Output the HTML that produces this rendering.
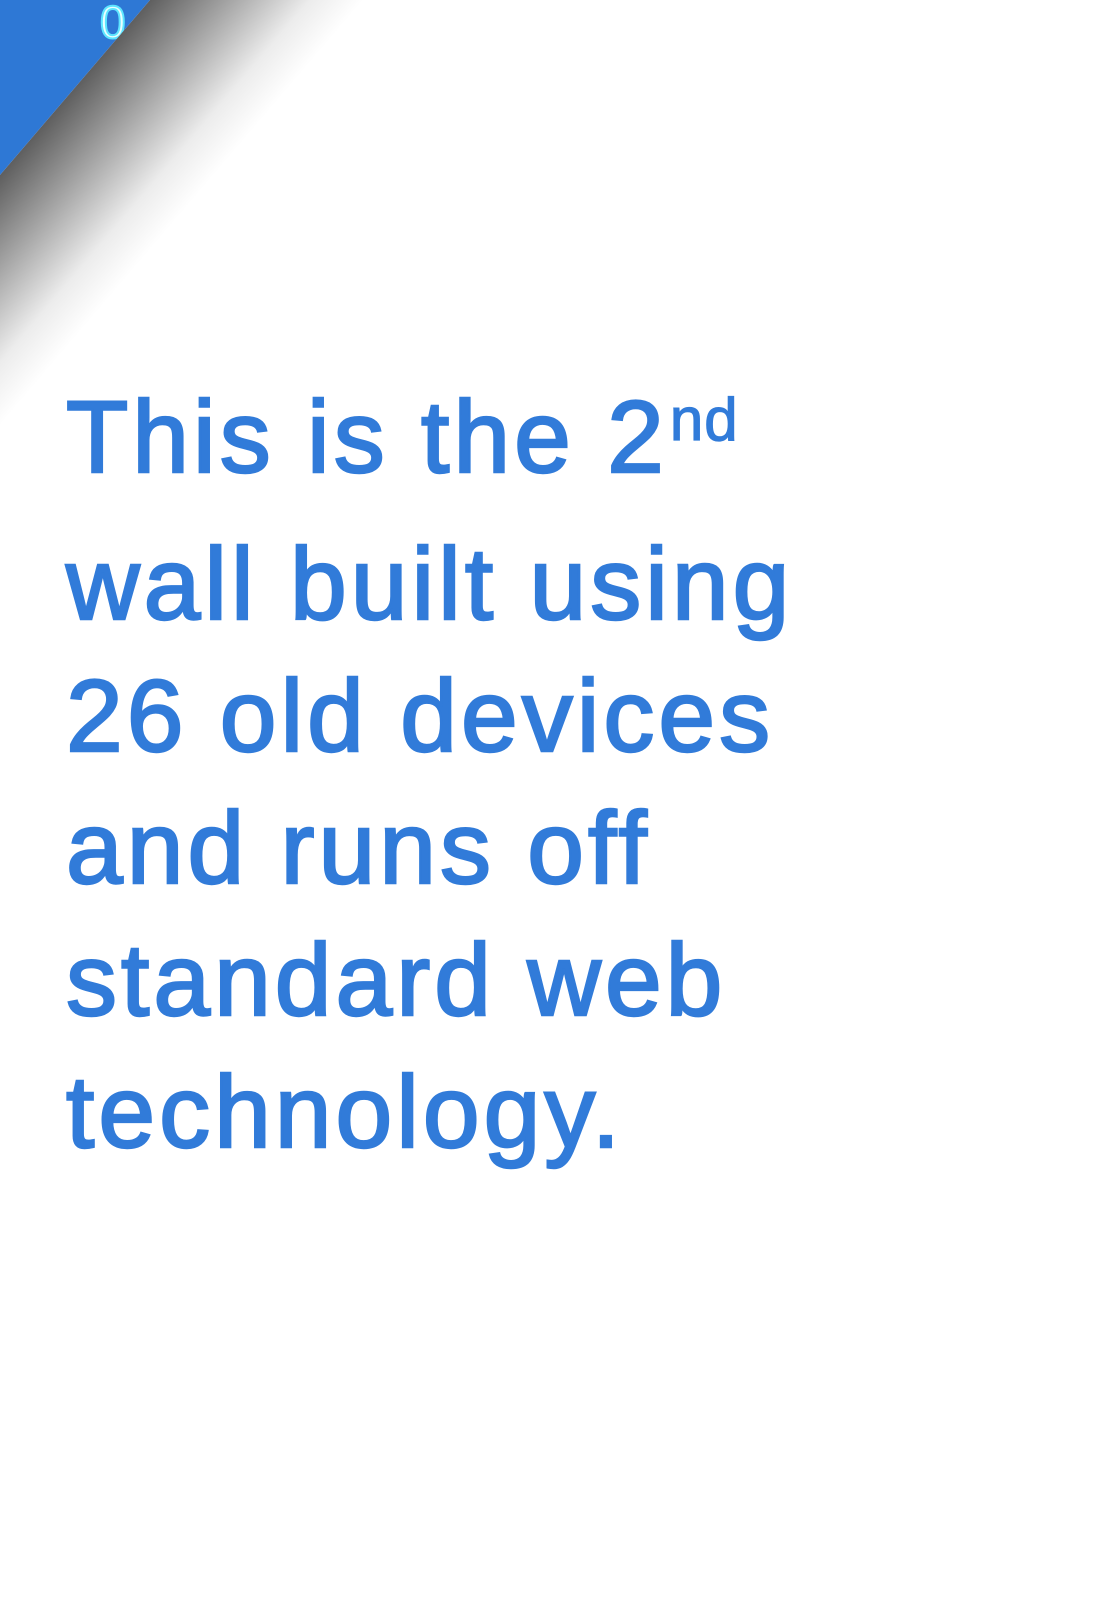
<!DOCTYPE html>
<html><head><meta charset="utf-8"><style>
html,body{margin:0;padding:0;background:#fff;width:1100px;height:1600px;overflow:hidden;position:relative}
.t{position:absolute;left:66px;top:371px;font-family:"Liberation Sans",sans-serif;font-size:102px;line-height:132px;color:#317bd9;white-space:nowrap;letter-spacing:4px;-webkit-text-stroke:2.4px #317bd9}
sup{font-size:60px;vertical-align:0;position:relative;top:-32px;margin-left:2px;letter-spacing:1px;-webkit-text-stroke:1.2px #317bd9}
svg{position:absolute;left:0;top:0}
</style></head><body>
<svg width="420" height="440" viewBox="0 0 420 440">
<defs>
<linearGradient id="g" gradientUnits="userSpaceOnUse" x1="86" y1="74" x2="210" y2="180">
<stop offset="0" stop-color="#5e5e5e"/>
<stop offset="0.35" stop-color="#a0a0a0"/>
<stop offset="0.75" stop-color="#ececec"/>
<stop offset="1" stop-color="#ffffff"/>
</linearGradient>
<clipPath id="c"><polygon points="0,0 150,0 0,175"/></clipPath>
</defs>
<polygon points="150,0 420,0 420,440 0,440 0,175" fill="url(#g)"/>
<polygon points="0,0 150,0 0,175" fill="#2e78d5"/>
<text x="100" y="38" font-family="Liberation Sans,sans-serif" font-size="46" fill="#e8ffff" stroke="#5ee6ff" stroke-width="2" clip-path="url(#c)">0</text>
</svg>
<div class="t">This is the 2<sup>nd</sup><br>wall built using<br>26 old devices<br>and runs off<br>standard web<br>technology.</div>
</body></html>
